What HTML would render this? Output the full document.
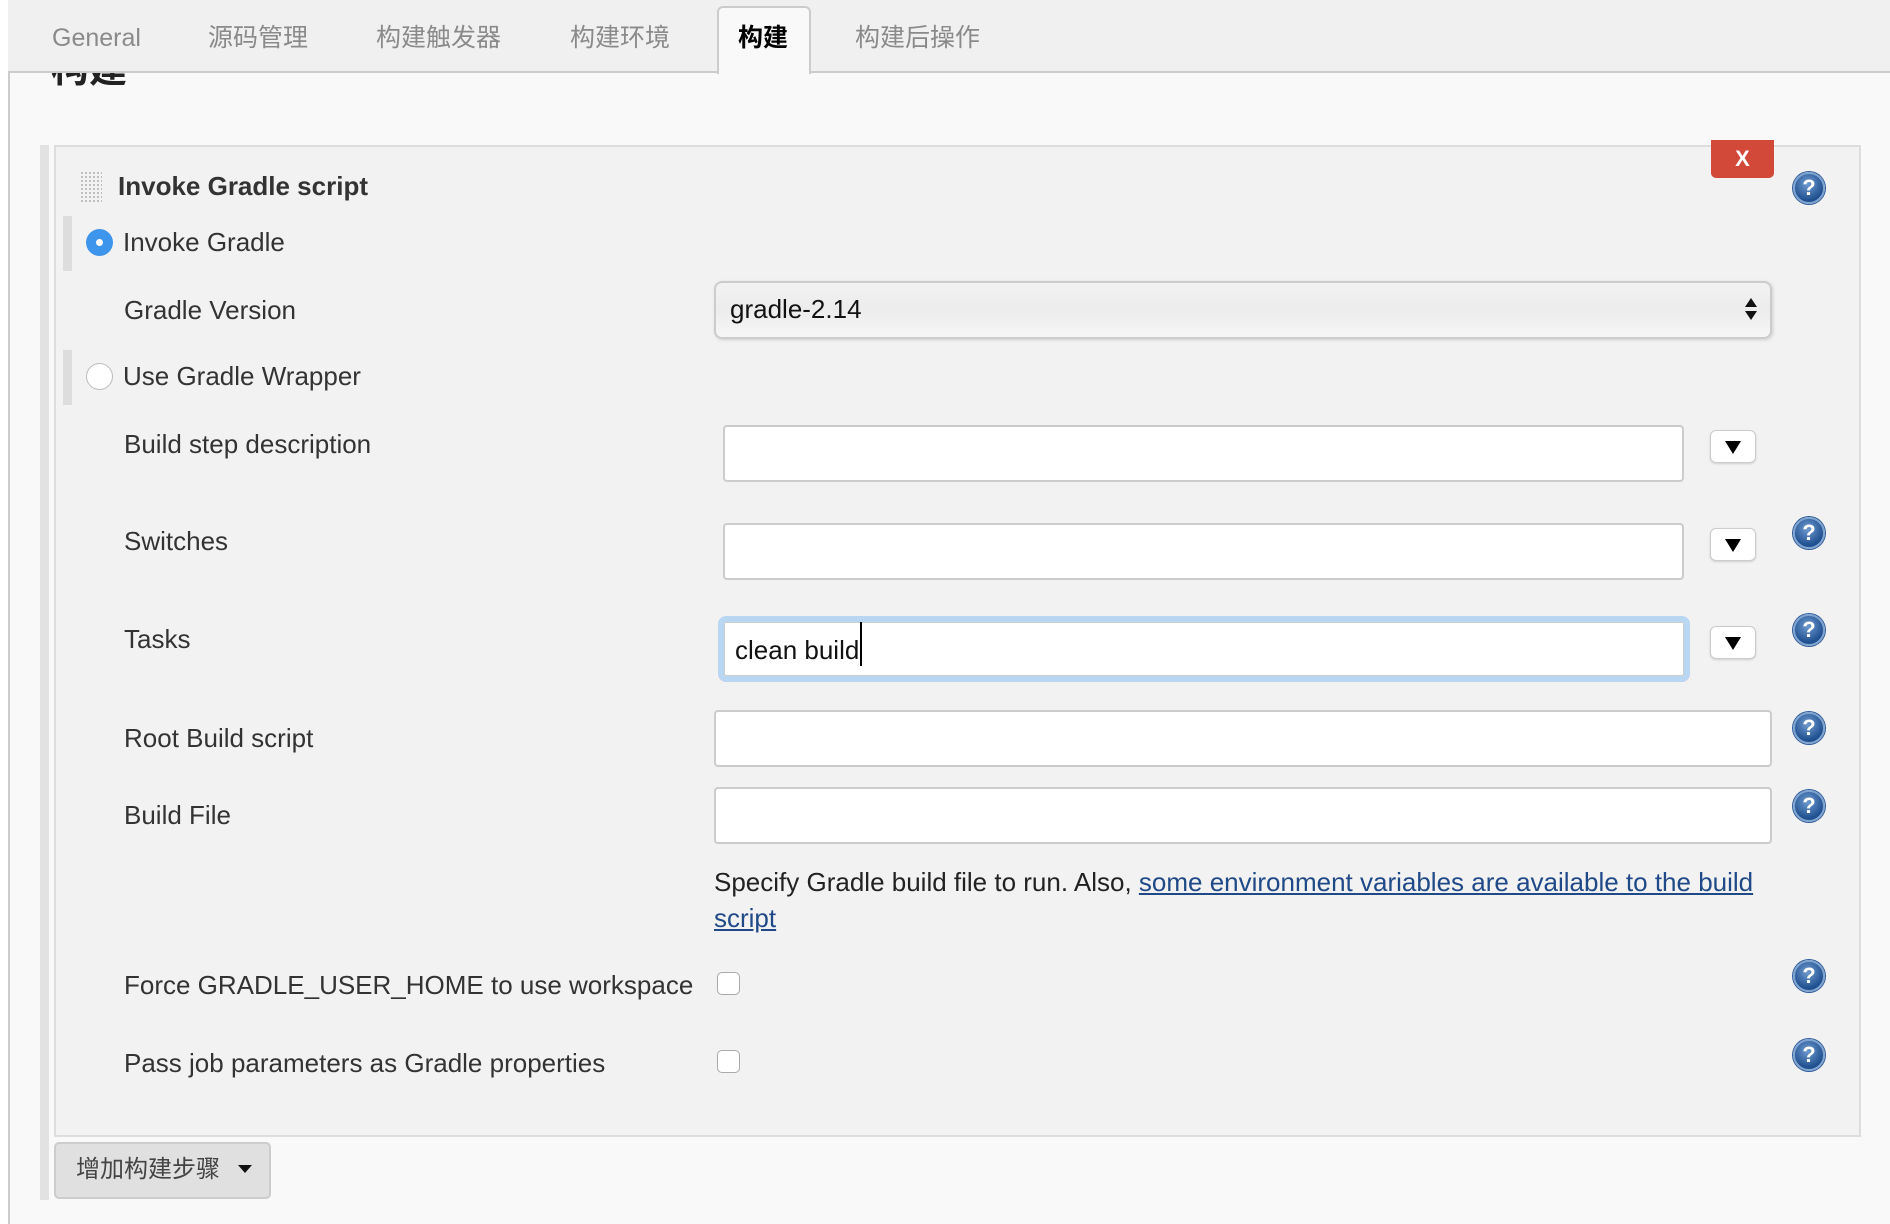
<!DOCTYPE html>
<html><head><meta charset="utf-8"><style>
*{margin:0;padding:0;box-sizing:border-box}
body{width:1890px;height:1224px;overflow:hidden;background:#fff;font-family:"Liberation Sans","Noto Sans CJK SC",sans-serif;color:#333;position:relative}
.a{position:absolute}
.main{left:8px;top:0;width:1882px;height:1224px;background:#f9f9f9;border-left:2px solid #ccc}
.tabbar{left:8px;top:0;width:1882px;height:73px;background:#f0f0f0;border-bottom:2px solid #ccc}
.tab{position:absolute;top:22px;font-size:25px;color:#8a8a8a;line-height:32px}
.act{left:717px;top:6px;width:94px;height:68px;background:#f9f9f9;border:2px solid #ccc;border-bottom:none;border-radius:6px 6px 0 0}
.lbl{position:absolute;font-size:26px;color:#333;line-height:30px;white-space:nowrap}
.inp{position:absolute;background:#fff;border:2px solid #ccc;border-radius:4px}
.dd{position:absolute;width:46px;height:33px;background:#fff;border:1px solid #ccc;border-radius:6px;box-shadow:0 1px 2px rgba(0,0,0,.15)}
.dd:after{content:"";position:absolute;left:14px;top:10px;border-left:8px solid transparent;border-right:8px solid transparent;border-top:13px solid #000}
.help{position:absolute;width:32px;height:32px;border-radius:50%;background:radial-gradient(circle at 45% 35%,#6f9bd0,#1f4f8f 70%);border:2px solid #7fa3cf;box-shadow:0 0 0 1px #2b5a97;color:#fff;font:bold 22px/28px "Liberation Sans",sans-serif;text-align:center}
.cb{position:absolute;width:23px;height:23px;background:#fff;border:1px solid #aaa;border-radius:5px}
.radio{position:absolute;width:27px;height:27px;border-radius:50%}
.lbar{position:absolute;left:63px;width:9px;background:#ddd}
</style></head><body>
<div class="a main"></div>
<div class="a" style="left:51px;top:48px;font-size:38px;font-weight:bold;color:#222;line-height:44px">构建</div>
<div class="a tabbar"></div>
<div class="a act"></div>
<div class="tab" style="left:52px">General</div>
<div class="tab" style="left:208px">源码管理</div>
<div class="tab" style="left:376px">构建触发器</div>
<div class="tab" style="left:570px">构建环境</div>
<div class="tab" style="left:738px;color:#000;font-weight:bold">构建</div>
<div class="tab" style="left:855px">构建后操作</div>

<div class="a" style="left:40px;top:145px;width:9px;height:1055px;background:#e2e2e2"></div>
<div class="a" style="left:54px;top:145px;width:1807px;height:992px;background:#f2f2f2;border:2px solid #ddd"></div>

<div class="a" style="left:80px;top:171px;width:22px;height:32px;background-image:radial-gradient(#bbb 1px,transparent 1.2px);background-size:4px 4px"></div>
<div class="a" style="left:118px;top:170px;font-size:26px;font-weight:bold;color:#333;line-height:32px">Invoke Gradle script</div>
<div class="a" style="left:1711px;top:140px;width:63px;height:38px;background:#d24939;border-radius:0 0 5px 5px;color:#fff;font:bold 22px/38px 'Liberation Sans',sans-serif;text-align:center">X</div>
<div class="help" style="left:1793px;top:172px">?</div>

<div class="lbar" style="top:216px;height:55px"></div>
<div class="radio" style="left:86px;top:229px;background:#3e95ec"><div class="a" style="left:10px;top:10px;width:7px;height:7px;border-radius:50%;background:#fff"></div></div>
<div class="lbl" style="left:123px;top:227px">Invoke Gradle</div>
<div class="lbl" style="left:124px;top:295px">Gradle Version</div>
<div class="a" style="left:714px;top:281px;width:1058px;height:58px;border:2px solid #ccc;border-radius:8px;background:linear-gradient(#f2f2f2,#ececec 50%,#f6f6f6);box-shadow:1px 1px 3px rgba(0,0,0,.15)"></div>
<div class="lbl" style="left:730px;top:294px;color:#111">gradle-2.14</div>
<div class="a" style="left:1745px;top:298px;border-left:6px solid transparent;border-right:6px solid transparent;border-bottom:9px solid #111"></div>
<div class="a" style="left:1745px;top:311px;border-left:6px solid transparent;border-right:6px solid transparent;border-top:9px solid #111"></div>

<div class="lbar" style="top:350px;height:55px"></div>
<div class="radio" style="left:86px;top:363px;background:#fff;border:1px solid #bbb"></div>
<div class="lbl" style="left:123px;top:361px">Use Gradle Wrapper</div>

<div class="lbl" style="left:124px;top:429px">Build step description</div>
<div class="inp" style="left:723px;top:425px;width:961px;height:57px"></div>
<div class="dd" style="left:1710px;top:430px"></div>

<div class="lbl" style="left:124px;top:526px">Switches</div>
<div class="inp" style="left:723px;top:523px;width:961px;height:57px"></div>
<div class="dd" style="left:1710px;top:528px"></div>
<div class="help" style="left:1793px;top:517px">?</div>

<div class="lbl" style="left:124px;top:624px">Tasks</div>
<div class="inp" style="left:718px;top:616px;width:972px;height:66px;border:6px solid #b9d6f2;border-radius:8px;box-shadow:inset 0 0 0 1px #ccc"></div>
<div class="lbl" style="left:735px;top:635px;color:#111">clean build</div>
<div class="a" style="left:860px;top:622px;width:2px;height:44px;background:#000"></div>
<div class="dd" style="left:1710px;top:626px"></div>
<div class="help" style="left:1793px;top:614px">?</div>

<div class="lbl" style="left:124px;top:723px">Root Build script</div>
<div class="inp" style="left:714px;top:710px;width:1058px;height:57px"></div>
<div class="help" style="left:1793px;top:712px">?</div>

<div class="lbl" style="left:124px;top:800px">Build File</div>
<div class="inp" style="left:714px;top:787px;width:1058px;height:57px"></div>
<div class="help" style="left:1793px;top:790px">?</div>

<div class="lbl" style="left:714px;top:864px;width:1060px;line-height:36px;color:#222;white-space:normal">Specify Gradle build file to run. Also, <span style="color:#204a87;text-decoration:underline">some environment variables are available to the build script</span></div>

<div class="lbl" style="left:124px;top:970px">Force GRADLE_USER_HOME to use workspace</div>
<div class="cb" style="left:717px;top:972px"></div>
<div class="help" style="left:1793px;top:960px">?</div>

<div class="lbl" style="left:124px;top:1048px">Pass job parameters as Gradle properties</div>
<div class="cb" style="left:717px;top:1050px"></div>
<div class="help" style="left:1793px;top:1039px">?</div>

<div class="a" style="left:54px;top:1142px;width:217px;height:57px;background:#e0e0e0;border:2px solid #ccc;border-radius:5px"></div>
<div class="a" style="left:76px;top:1155px;font-size:24px;color:#444;line-height:30px">增加构建步骤</div>
<div class="a" style="left:238px;top:1165px;border-left:7px solid transparent;border-right:7px solid transparent;border-top:8px solid #111"></div>
</body></html>
